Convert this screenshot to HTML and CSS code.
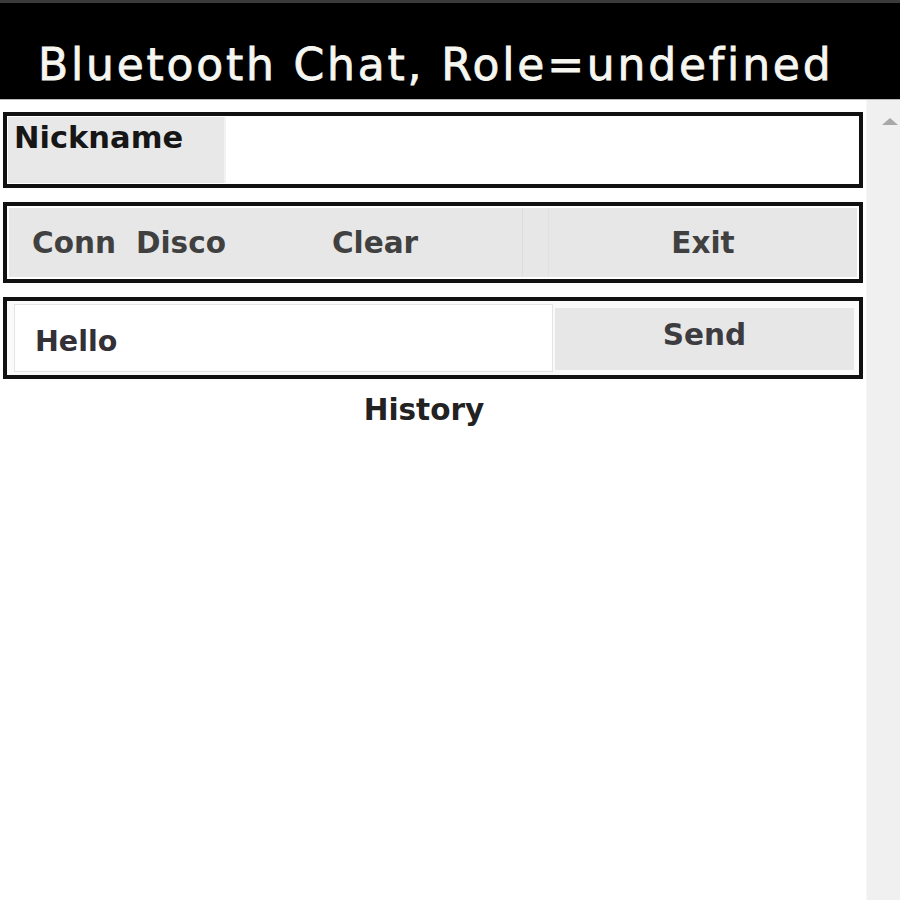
FILE: index.html
```html
<!DOCTYPE html>
<html>
<head>
<meta charset="utf-8">
<link rel="stylesheet" href="styles.css">
</head>
<body>
<header class="titlebar">
  <h1 class="title">Bluetooth Chat, Role=undefined</h1>
</header>
<div class="main">
  <div class="content">
    <div class="box nick-box">
      <div class="nick-label">Nickname</div>
      <div class="nick-input"></div>
    </div>
    <div class="box btn-box">
      <div class="btn btn-conn">Conn</div>
      <div class="btn btn-disco">Disco</div>
      <div class="btn btn-clear">Clear</div>
      <div class="btn btn-spacer"></div>
      <div class="btn btn-exit">Exit</div>
    </div>
    <div class="box send-box">
      <div class="msg-input">Hello</div>
      <div class="btn-send">Send</div>
    </div>
    <div class="history">History</div>
  </div>
  <div class="scrollbar">
    <div class="arrow-up"></div>
  </div>
</div>
</body>
</html>
```
FILE: styles.css
```css
html, body {
  margin: 0;
  padding: 0;
  background: #ffffff;
}
body {
  width: 900px;
  height: 900px;
  overflow: hidden;
  font-family: "DejaVu Sans", "Liberation Sans", sans-serif;
}
.titlebar {
  height: 96px;
  background: #000000;
  border-top: 3px solid #3a3a3a;
  border-bottom: 1px solid #b8b8b8;
  box-sizing: content-box;
}
.title {
  margin: 0;
  padding: 40px 0 0 38px;
  font-family: "DejaVu Sans", sans-serif;
  font-weight: normal;
  font-size: 44px;
  line-height: 44px;
  letter-spacing: 2.8px;
  -webkit-text-stroke: 0.8px #f6f6f0;
  color: #f6f6f0;
  white-space: nowrap;
}
.main {
  display: flex;
  height: 800px;
}
.content {
  width: 861px;
  padding: 0 3px 0 3px;
}
.scrollbar {
  width: 33px;
  background: #f0f0f0;
  border-left: 1px solid #f7f7f7;
  display: flex;
  justify-content: center;
}
.arrow-up {
  margin-top: 18px;
  margin-left: 12px;
  width: 0;
  height: 0;
  border-left: 8px solid transparent;
  border-right: 8px solid transparent;
  border-bottom: 7px solid #a8a8a8;
}
.box {
  border: 4px solid #111111;
  box-sizing: border-box;
  display: flex;
  background: #ffffff;
}
.nick-box {
  margin-top: 12px;
  height: 76px;
  padding: 1px 2px 1px 1px;
}
.nick-label {
  width: 218px;
  background: #e8e8e8;
  border-right: 2px solid #f2f2f2;
  box-sizing: border-box;
  padding: 3px 0 0 6px;
  font-weight: bold;
  font-size: 30.5px;
  line-height: 36px;
  color: #161616;
}
.nick-input {
  flex: 1;
  background: #ffffff;
}
.btn-box {
  margin-top: 14px;
  height: 81px;
  padding: 2px 2px 2px 2px;
}
.btn {
  background: #e7e7e7;
  display: flex;
  align-items: center;
  font-weight: bold;
  font-size: 29.5px;
  color: #404040;
  white-space: nowrap;
}
.btn-conn {
  width: 123px;
  padding-left: 23px;
  box-sizing: border-box;
}
.btn-disco {
  width: 96px;
  padding-left: 4px;
  box-sizing: border-box;
}
.btn-clear {
  width: 295px;
  justify-content: center;
  border-right: 1px solid #dedede;
  box-sizing: border-box;
}
.btn-spacer {
  width: 26px;
  border-right: 1px solid #e0e0e0;
  box-sizing: border-box;
}
.btn-exit {
  flex: 1;
  justify-content: center;
}
.send-box {
  margin-top: 14px;
  height: 82px;
  padding: 3px 5px 3px 7px;
  background: #fafafa;
}
.msg-input {
  width: 539px;
  background: #ffffff;
  border: 1px solid #e4e4e4;
  box-sizing: border-box;
  display: flex;
  align-items: center;
  padding: 6px 0 0 20px;
  font-weight: bold;
  font-size: 28.5px;
  color: #333038;
}
.btn-send {
  flex: 1;
  margin: 4px 0 2px 2px;
  background: #e7e7e7;
  display: flex;
  align-items: center;
  justify-content: center;
  padding-bottom: 8px;
  font-weight: bold;
  font-size: 29.5px;
  color: #3c3c40;
}
.history {
  margin-top: 13px;
  padding-right: 18px;
  text-align: center;
  font-weight: bold;
  font-size: 29.5px;
  line-height: 36px;
  color: #222222;
}
```
